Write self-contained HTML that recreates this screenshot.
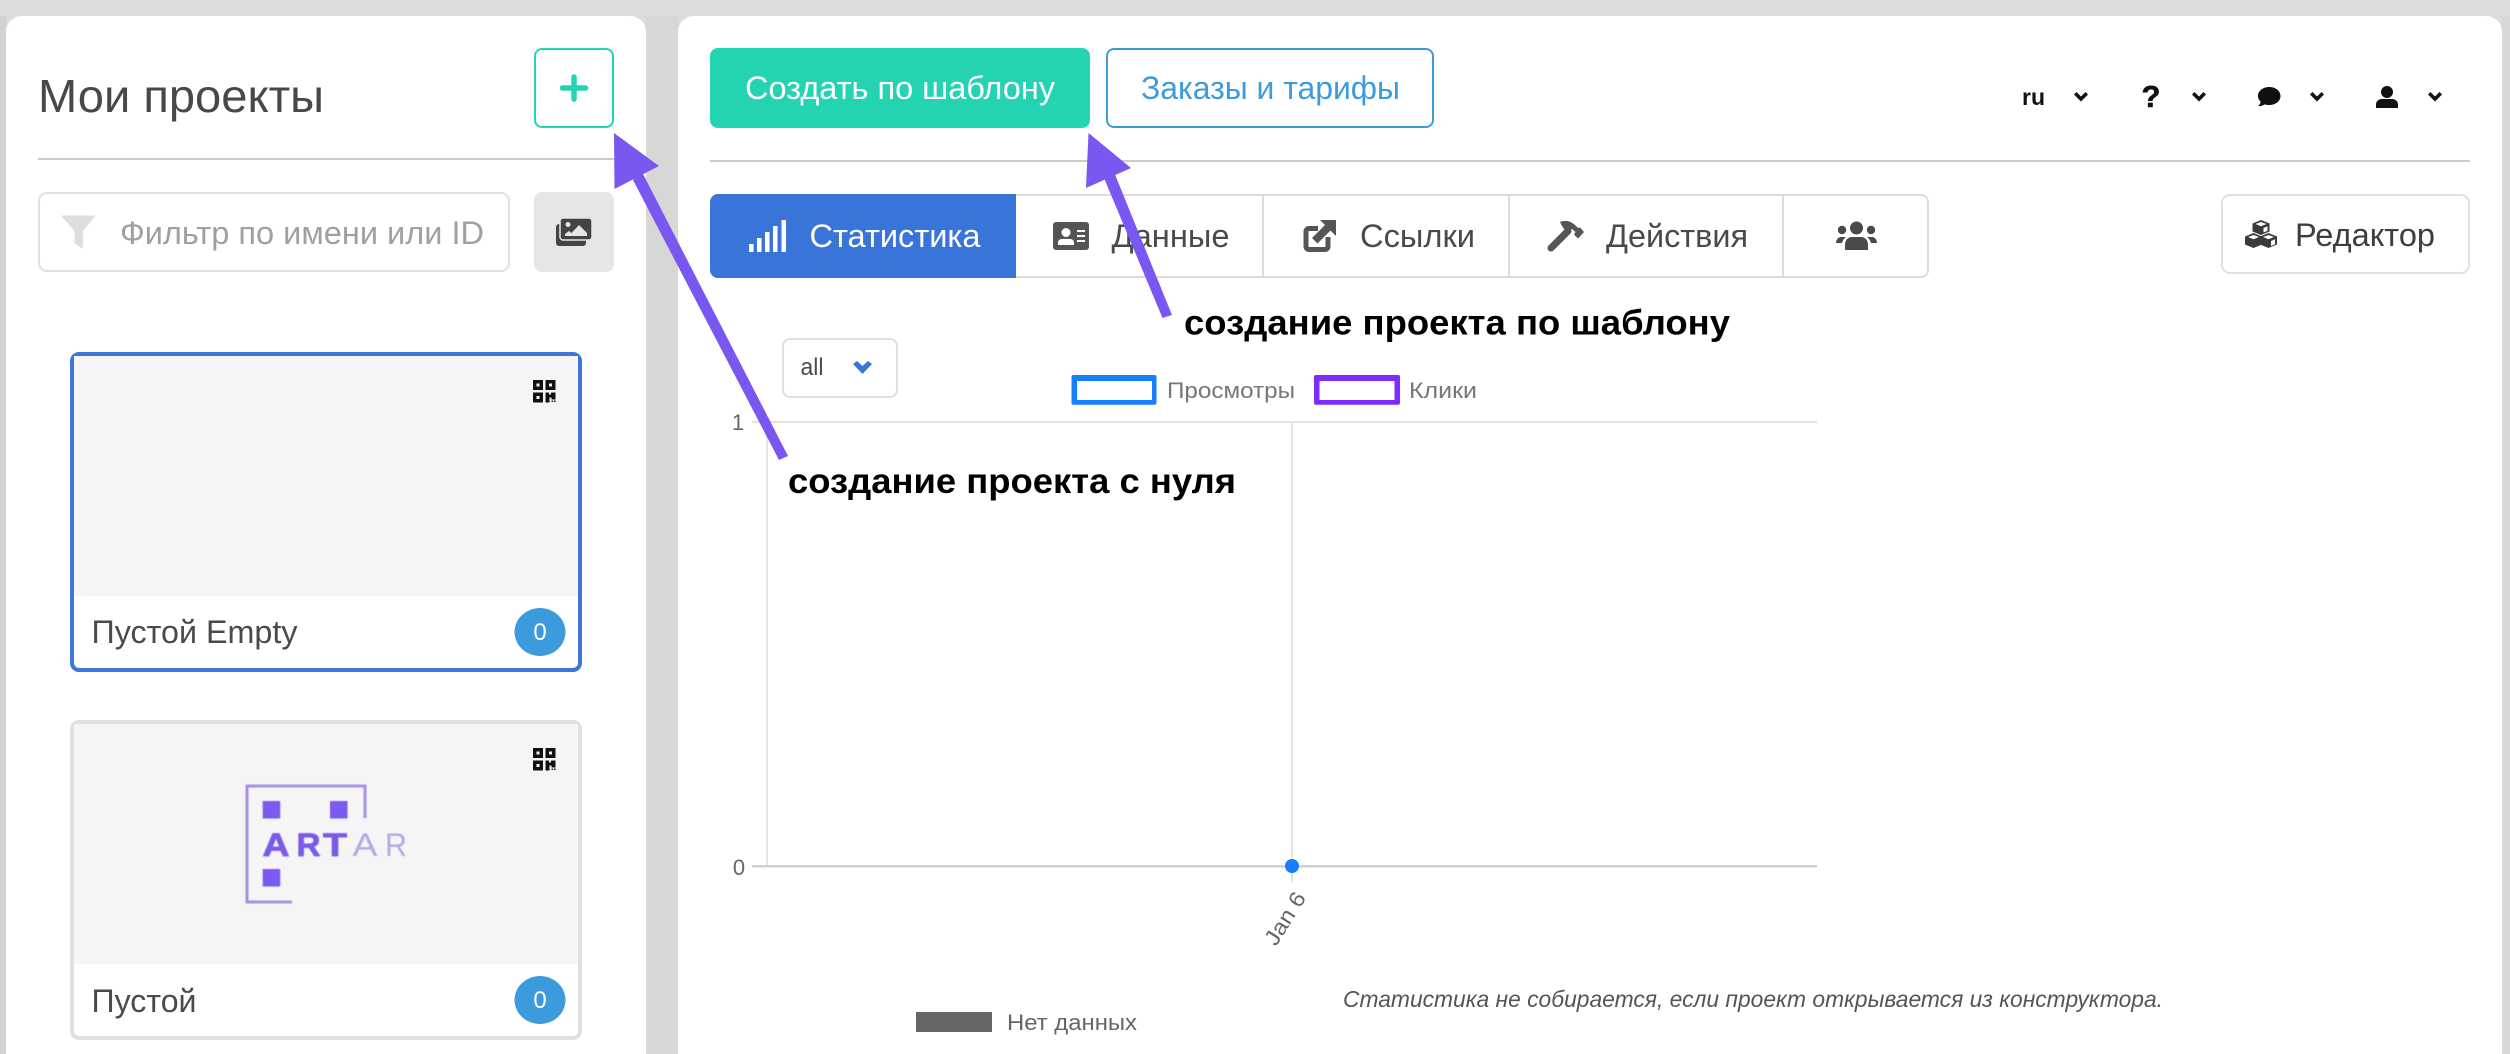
<!DOCTYPE html>
<html lang="ru"><head><meta charset="utf-8"><title>Мои проекты</title>
<style>
html,body{margin:0;padding:0;background:#dcdcdc;width:2510px;height:1054px;overflow:hidden}
svg{display:block}
text{font-family:"Liberation Sans","Noto Sans CJK SC",sans-serif}
</style></head><body>
<svg width="2510" height="1054" viewBox="0 0 2510 1054" xmlns="http://www.w3.org/2000/svg">
<defs>
<filter id="b" x="-5%" y="-5%" width="110%" height="110%"><feGaussianBlur stdDeviation="0.6"/></filter>
<g id="qr" fill="#111">
<path fill-rule="evenodd" d="M0 0h10v10H0zM3.500 3.500v3h3v-3zM12.500 0h10v10h-10zM16 3.500v3h3v-3zM0 12.500h10v10H0zM3.500 16v3h3v-3z"/>
<path d="M12.500 12.500h3.500v2h2v-2h4.500v7h-4v-2h-2v5h-4zM18.500 20.500h1.500v1.500h-1.500zM21 20.500h1.500v1.500H21z"/>
</g>
<path id="chev" d="M0 2.500 2.500 0 7 4.500 11.500 0 14 2.500 7 9.500z"/>
<g id="cube">
<path fill="#3a3a3a" d="M0 0l8.500 3.500v8l-8.500 3.500-8.500-3.500v-8z"/>
<path fill="#fff" d="M0 2l5.500 2L0 6.200-5.500 4z"/>
</g>
</defs>
<rect width="2510" height="1054" fill="#dcdcdc"/>
<rect x="646" y="16" width="32" height="1038" fill="#d7d7d7"/>
<rect x="0" y="16" width="6" height="1038" fill="#d2d2d2"/>
<rect x="2502" y="16" width="8" height="1038" fill="#d7d7d7"/>
<rect x="6" y="16" width="640" height="1060" rx="16" fill="#fff"/>
<rect x="678" y="16" width="1824" height="1060" rx="16" fill="#fff"/>

<!-- left header -->
<text x="38" y="112" font-size="46" fill="#484848" textLength="286" lengthAdjust="spacingAndGlyphs">Мои проекты</text>
<rect x="535" y="49" width="78" height="78" rx="7" fill="#fff" stroke="#24d3b2" stroke-width="2"/>
<path d="M574 77v22M562.500 88h23" stroke="#24d3b2" stroke-width="5.500" stroke-linecap="round" fill="none"/>
<rect x="38" y="158" width="576" height="2" fill="#cbcbcb"/>
<rect x="39" y="193" width="470" height="78" rx="8" fill="#fff" stroke="#e0e0e0" stroke-width="2"/>
<path d="M62 216H94.500L82.500 231V248L75 243V231z" fill="#dedede" stroke="#dedede" stroke-linejoin="round"/>
<text x="120" y="244" font-size="32" fill="#a0a0a0" textLength="364" lengthAdjust="spacingAndGlyphs">Фильтр по имени или ID</text>
<rect x="534" y="192" width="80" height="80" rx="8" fill="#e6e6e6"/>
<rect x="556" y="224" width="30" height="22" rx="3" fill="#444"/>
<rect x="560" y="218" width="32" height="22" rx="3" fill="#444" stroke="#e6e6e6" stroke-width="1.500"/>
<circle cx="568" cy="224.500" r="2.500" fill="#e6e6e6"/>
<path d="M565 236v-2l4-3 2.500 2 7.500-8 8 8v3z" fill="#e6e6e6"/>

<!-- card 1 -->
<rect x="72" y="354" width="508" height="316" rx="7" fill="#fff" stroke="#3a77d9" stroke-width="4"/>
<rect x="74" y="356" width="504" height="240" fill="#f5f5f5"/>
<use href="#qr" x="533" y="380"/>
<text x="91.500" y="643" font-size="32" fill="#4a4a4a" textLength="206" lengthAdjust="spacingAndGlyphs">Пустой Empty</text>
<ellipse cx="540" cy="632" rx="25.500" ry="24" fill="#3c9bdc"/>
<text x="540" y="640" font-size="24" fill="#fff" text-anchor="middle">0</text>

<!-- card 2 -->
<rect x="72" y="722" width="508" height="316" rx="7" fill="#fff" stroke="#e0e0e0" stroke-width="4"/>
<rect x="74" y="724" width="504" height="240" fill="#f5f5f5"/>
<use href="#qr" x="533" y="748"/>
<g filter="url(#b)">
<path d="M292 902H247V786h118v32" fill="none" stroke="#a68fe2" stroke-width="3"/>
<rect x="262.700" y="801" width="17.500" height="17.500" fill="#7a5af0"/>
<rect x="330" y="801" width="17.500" height="17.500" fill="#7a5af0"/>
<rect x="262.700" y="869" width="17.500" height="17.500" fill="#7a5af0"/>
<text x="262.500" y="856" font-size="32" font-weight="bold" fill="#7a5ae8" stroke="#7a5ae8" stroke-width=".8" textLength="27" lengthAdjust="spacingAndGlyphs">A</text>
<text x="296.500" y="856" font-size="32" font-weight="bold" fill="#7a5ae8" stroke="#7a5ae8" stroke-width=".8" textLength="24" lengthAdjust="spacingAndGlyphs">R</text>
<text x="323" y="856" font-size="32" font-weight="bold" fill="#7a5ae8" stroke="#7a5ae8" stroke-width=".8" textLength="24" lengthAdjust="spacingAndGlyphs">T</text>
<text x="352.500" y="856" font-size="32" fill="#b6a8e2" textLength="25" lengthAdjust="spacingAndGlyphs">A</text>
<text x="385" y="856" font-size="32" fill="#b6a8e2" textLength="22" lengthAdjust="spacingAndGlyphs">R</text>
</g>
<text x="91.500" y="1012" font-size="32" fill="#4a4a4a" textLength="105" lengthAdjust="spacingAndGlyphs">Пустой</text>
<ellipse cx="540" cy="1000" rx="25.500" ry="24" fill="#3c9bdc"/>
<text x="540" y="1008" font-size="24" fill="#fff" text-anchor="middle">0</text>

<!-- top bar -->
<rect x="710" y="48" width="380" height="80" rx="8" fill="#24d3b2"/>
<text x="745" y="99" font-size="32" fill="#fff" textLength="310" lengthAdjust="spacingAndGlyphs">Создать по шаблону</text>
<rect x="1107" y="49" width="326" height="78" rx="7" fill="#fff" stroke="#3c9bdc" stroke-width="2"/>
<text x="1141" y="99" font-size="32" fill="#3c9bdc" textLength="259" lengthAdjust="spacingAndGlyphs">Заказы и тарифы</text>
<text x="2022" y="105" font-size="23" font-weight="bold" fill="#111" textLength="23" lengthAdjust="spacingAndGlyphs">ru</text>
<use href="#chev" x="2074" y="92" fill="#111"/>
<text x="2151" y="107" font-size="31" font-weight="bold" fill="#111" stroke="#111" stroke-width=".6" text-anchor="middle">?</text>
<use href="#chev" x="2192" y="92" fill="#111"/>
<path d="M2269 87c6.500 0 11.500 3.800 11.500 9s-5 9-11.500 9c-1.500 0-3-.2-4.300-.6-2 1.400-4.300 1.900-6.700 1.900 1.500-1.400 2.500-3 2.700-4.500-1.700-1.600-2.700-3.600-2.700-5.800 0-5.200 5-9 11.500-9z" fill="#111"/>
<use href="#chev" x="2310" y="92" fill="#111"/>
<circle cx="2387" cy="92" r="6" fill="#111"/>
<path d="M2376 108v-3.500c0-3.500 3-5.500 6-5.500h10c3 0 6 2 6 5.500v3.500z" fill="#111"/>
<use href="#chev" x="2428" y="92" fill="#111"/>
<rect x="710" y="160" width="1760" height="2" fill="#cbcbcb"/>

<!-- tabs -->
<rect x="711" y="195" width="1217" height="82" rx="7" fill="#fff" stroke="#dcdcdc" stroke-width="2"/>
<path d="M718 194h298v84H718a8 8 0 0 1-8-8v-68a8 8 0 0 1 8-8z" fill="#3975d9"/>
<rect x="1262" y="195" width="2" height="82" fill="#dcdcdc"/>
<rect x="1508" y="195" width="2" height="82" fill="#dcdcdc"/>
<rect x="1782" y="195" width="2" height="82" fill="#dcdcdc"/>
<g fill="#fff"><rect x="749" y="244" width="4.500" height="8"/><rect x="757" y="238" width="4.500" height="14"/><rect x="765" y="232" width="4.500" height="20"/><rect x="773" y="226" width="4.500" height="26"/><rect x="781.500" y="220" width="4.500" height="32"/></g>
<text x="809.500" y="247" font-size="32" fill="#fff" textLength="171" lengthAdjust="spacingAndGlyphs">Статистика</text>

<path fill-rule="evenodd" fill="#555" d="M1056 222h30a3 3 0 0 1 3 3v22a3 3 0 0 1-3 3h-30a3 3 0 0 1-3-3v-22a3 3 0 0 1 3-3zM1066 228a4.500 4.500 0 1 0 0 9 4.500 4.500 0 0 0 0-9zM1058 245h16v-2.500c0-2.200-2-3.500-4-3.500h-8c-2 0-4 1.300-4 3.500zM1077 230v2h8v-2zM1077 235v2h8v-2zM1077 240v2h8v-2z"/>
<text x="1111.500" y="247" font-size="32" fill="#4a4a4a" textLength="118" lengthAdjust="spacingAndGlyphs">Данные</text>
<path d="M1318 228.500H1309a3 3 0 0 0-3 3V246.500a3 3 0 0 0 3 3H1325a3 3 0 0 0 3-3V237" fill="none" stroke="#555" stroke-width="5"/>
<path fill="#555" d="M1320 220h16v16l-5.500-5.500-13 13-5.500-5.500 13-13z"/>
<text x="1360" y="247" font-size="32" fill="#4a4a4a" textLength="115" lengthAdjust="spacingAndGlyphs">Ссылки</text>
<path d="M1551 248L1568 231" stroke="#555" stroke-width="7" stroke-linecap="round" fill="none"/>
<path fill="#555" d="M1560 222C1567 219 1573 222 1578 228L1580 227.500 1584 232 1578 238.500 1574 234.500 1575.500 232 1572 229 1566 232 1562 226z"/>
<text x="1606" y="247" font-size="32" fill="#4a4a4a" textLength="142" lengthAdjust="spacingAndGlyphs">Действия</text>
<g fill="#4a4a4a"><circle cx="1856.500" cy="228" r="6.500"/><circle cx="1842" cy="230" r="4.200"/><circle cx="1871" cy="230" r="4.200"/>
<path d="M1845 250v-5c0-5 3-8 7-8h9c4 0 7 3 7 8v5z"/><path d="M1836 243c0-3 2-6 5-6h5c-2 1.500-3.500 3.500-4 6h-6zM1877 243c0-3-2-6-5-6h-5c2 1.500 3.500 3.500 4 6h6z"/></g>

<!-- editor -->
<rect x="2222" y="195" width="247" height="78" rx="8" fill="#fff" stroke="#e0e0e0" stroke-width="2"/>
<use href="#cube" x="2261" y="220"/>
<use href="#cube" x="2253.500" y="233"/>
<use href="#cube" x="2268.500" y="233"/>
<path fill="#fff" d="M2271 241l4-1.700v5l-4 1.700z"/>
<path fill="#fff" d="M2263.500 228l4-1.700v4.500l-4 1.700z"/>
<text x="2295" y="246" font-size="32" fill="#3e3e3e" textLength="140" lengthAdjust="spacingAndGlyphs">Редактор</text>

<!-- select -->
<rect x="783" y="339" width="114" height="58" rx="7" fill="#fff" stroke="#e0e0e0" stroke-width="2"/>
<text x="800.500" y="375" font-size="24" fill="#4a4a4a" textLength="23" lengthAdjust="spacingAndGlyphs">all</text>
<path d="M853 364l4-3 5.500 5 5.500-5 4 3-9.500 10z" fill="#3975d9"/>

<!-- legend -->
<rect x="1071.500" y="375" width="85" height="29.700" rx="2" fill="#177eff"/>
<rect x="1077" y="381" width="75" height="19" fill="#fff"/>
<text x="1167" y="398" font-size="22" fill="#777" textLength="128" lengthAdjust="spacingAndGlyphs">Просмотры</text>
<rect x="1314" y="375" width="86" height="29.700" rx="2" fill="#7f2bff"/>
<rect x="1319.500" y="381" width="75" height="19" fill="#fff"/>
<text x="1409" y="398" font-size="22" fill="#777" textLength="68" lengthAdjust="spacingAndGlyphs">Клики</text>

<!-- chart -->
<rect x="752" y="421" width="1065" height="2" fill="#e2e2e2"/>
<rect x="766" y="421" width="2" height="445" fill="#e4e4e4"/>
<rect x="1291" y="421" width="2" height="461" fill="#e4e4e4"/>
<rect x="752" y="865" width="1065" height="2.500" fill="#cfcfcf"/>
<text x="738" y="430" font-size="22" fill="#666" text-anchor="middle">1</text>
<text x="739" y="875" font-size="22" fill="#666" text-anchor="middle">0</text>
<circle cx="1292" cy="866" r="7" fill="#177eff"/>
<text transform="translate(1276 947) rotate(-58)" font-size="22" fill="#666" textLength="58" lengthAdjust="spacingAndGlyphs">Jan 6</text>
<text x="1343" y="1007" font-size="23" font-style="italic" fill="#555" textLength="820" lengthAdjust="spacingAndGlyphs">Статистика не собирается, если проект открывается из конструктора.</text>
<rect x="916" y="1012" width="76" height="20" fill="#666"/>
<text x="1007" y="1030" font-size="22" fill="#666" textLength="130" lengthAdjust="spacingAndGlyphs">Нет данных</text>

<!-- annotations -->
<g fill="#7b57f1">
<path d="M614 133 659 166 614.500 189z"/>
<path d="M633 180 642 172 788 456 779 460z"/>
<path d="M1088.500 133 1131 168 1086 188z"/>
<path d="M1104 178 1114 172 1172 315 1162.500 318z"/>
</g>
<text x="1184" y="334.500" font-size="35" font-weight="bold" fill="#000" textLength="546" lengthAdjust="spacingAndGlyphs">создание проекта по шаблону</text>
<text x="788" y="493" font-size="35" font-weight="bold" fill="#000" textLength="448" lengthAdjust="spacingAndGlyphs">создание проекта с нуля</text>
</svg>
</body></html>
